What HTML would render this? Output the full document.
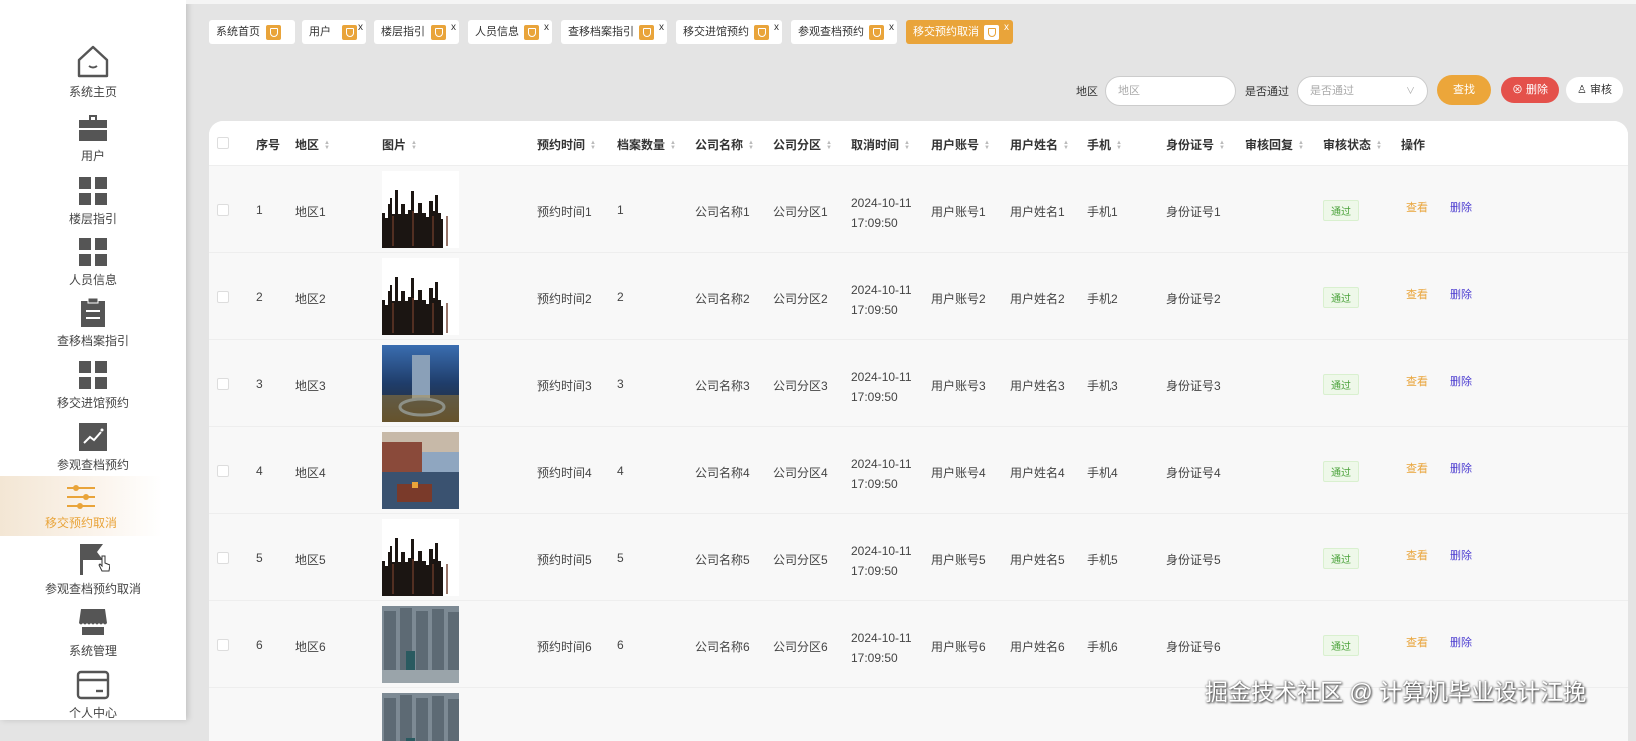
<!DOCTYPE html>
<html><head><meta charset="utf-8"><style>
*{margin:0;padding:0;box-sizing:border-box}
body{width:1636px;height:720px;overflow:hidden;background:#e4e4e4;font-family:"Liberation Sans","Noto Sans CJK SC",sans-serif;font-size:12px;color:#333;position:relative}
.side{position:absolute;left:0;top:0;width:186px;height:720px;background:#fff;box-shadow:2px 0 6px rgba(0,0,0,.15)}
.item{position:absolute;left:0;width:186px;text-align:center;color:#444;font-size:12px}
.item svg{display:block;margin:0 auto 4px}
.active{background:linear-gradient(90deg,#f3e6d4,#fbf4ec 60%,#fff);width:162px}
.topw{position:absolute;left:186px;top:0;right:0;height:4px;background:#f5f5f5}
.tag{position:absolute;top:20px;height:24px;background:#fff;border-radius:3px;font-size:11px;line-height:24px;padding-left:7px;color:#333}
.tag i{position:absolute;top:5px;width:15px;height:15px;background:#e9a43a;border-radius:2px}
.tag i:after{content:"";position:absolute;left:4px;top:3px;width:6px;height:7px;border:1px solid #fff;border-radius:1px 1px 4px 4px}
.tag b{position:absolute;top:-4px;font-weight:normal;font-size:10px;color:#333}
.card{position:absolute;left:209px;top:121px;width:1419px;height:620px;background:#f8f8f8;border-radius:14px 14px 0 0;overflow:hidden}
.hd{position:absolute;left:0;top:0;width:100%;height:44px;background:#fff}
.c{position:absolute;white-space:nowrap}
.h{font-weight:bold;color:#333;top:15px}
.s{display:inline-block;width:6px;margin-left:5px;vertical-align:middle;color:#bbb;font-size:6px;line-height:5px}
.cb{width:12px;height:12px;border:1px solid #ddd;background:#fff;border-radius:2px}
.row{position:absolute;left:0;width:100%;height:87px;border-top:1px solid #eee;color:#444}
.pass{border:1px solid #d9f0cf;background:#eef8e9;color:#4aa23a;font-size:10px;padding:2px 7px;border-radius:2px}
.inp{position:absolute;top:76px;height:30px;background:#fff;border:1px solid #ccc;border-radius:15px;color:#aaa;font-size:11px;line-height:28px;padding-left:12px}
.btn{position:absolute;height:26px;border-radius:13px;line-height:26px;text-align:center;font-size:11px}
.wm{position:absolute;left:1205px;top:673px;font-size:23px;color:#fff;text-shadow:0 0 2px #555,1px 1px 2px #333;white-space:nowrap}
</style></head><body>
<div class="side">
<div class="item" style="top:45px"><svg width="34" height="34" viewBox="0 0 34 34"><path d="M17 2L3 15v16h28V15z" fill="none" stroke="#555" stroke-width="2.4" stroke-linejoin="round"/><path d="M13 21q4 3 8 0" fill="none" stroke="#555" stroke-width="2"/></svg>系统主页</div>
<div class="item" style="top:113px"><svg width="30" height="30" viewBox="0 0 30 30"><path d="M11 2h8v5h-2V4h-4v3h-2z M1 7h28v8H1z M1 17h28v11H1z" fill="#555"/></svg>用户</div>
<div class="item" style="top:176px"><svg width="30" height="30" viewBox="0 0 30 30"><rect x="1" y="1" width="12" height="12" fill="#555"/><rect x="17" y="1" width="12" height="12" fill="#555"/><rect x="1" y="17" width="12" height="12" fill="#555"/><rect x="17" y="17" width="12" height="12" fill="#555"/></svg>楼层指引</div>
<div class="item" style="top:237px"><svg width="30" height="30" viewBox="0 0 30 30"><rect x="1" y="1" width="12" height="12" fill="#555"/><rect x="17" y="1" width="12" height="12" fill="#555"/><rect x="1" y="17" width="12" height="12" fill="#555"/><rect x="17" y="17" width="12" height="12" fill="#555"/></svg>人员信息</div>
<div class="item" style="top:298px"><svg width="30" height="30" viewBox="0 0 30 30"><path d="M3 3h24v26H3z" fill="#555"/><rect x="10" y="0" width="10" height="5" fill="#555" stroke="#fff" stroke-width="1"/><rect x="8" y="12" width="14" height="2" fill="#fff"/><rect x="8" y="19" width="14" height="2" fill="#fff"/></svg>查移档案指引</div>
<div class="item" style="top:360px"><svg width="30" height="30" viewBox="0 0 30 30"><rect x="1" y="1" width="12" height="12" fill="#555"/><rect x="17" y="1" width="12" height="12" fill="#555"/><rect x="1" y="17" width="12" height="12" fill="#555"/><rect x="17" y="17" width="12" height="12" fill="#555"/></svg>移交进馆预约</div>
<div class="item" style="top:422px"><svg width="30" height="30" viewBox="0 0 30 30"><rect x="1" y="1" width="28" height="28" fill="#555"/><path d="M6 21l6-6 4 3 7-8" fill="none" stroke="#fff" stroke-width="2"/><circle cx="24" cy="8" r="1.5" fill="#fff"/></svg>参观查档预约</div>
<div class="item active" style="top:476px;height:60px;padding-top:8px;color:#e9a43a"><svg width="30" height="26" viewBox="0 0 30 26"><g stroke="#e9a43a" stroke-width="2"><line x1="1" y1="4" x2="29" y2="4"/><line x1="1" y1="13" x2="29" y2="13"/><line x1="1" y1="22" x2="29" y2="22"/></g><circle cx="10" cy="4" r="3" fill="#e9a43a"/><circle cx="20" cy="13" r="3" fill="#e9a43a"/><circle cx="14" cy="22" r="3" fill="#e9a43a"/></svg>移交预约取消</div>
<div class="item" style="top:543px"><svg width="34" height="33" viewBox="0 0 34 33"><rect x="4" y="1" width="3" height="31" fill="#555"/><path d="M7 1h20l-6 8 6 8H7z" fill="#555"/><path d="M26 13v10l-2-2-1 1 3 6h7l1-6-5-2v-7z" fill="#fff" stroke="#333" stroke-width="1"/></svg>参观查档预约取消</div>
<div class="item" style="top:608px"><svg width="30" height="30" viewBox="0 0 30 30"><path d="M3 1h24l2 14q-2 3-4 0-2 3-4 0-2 3-4 0-2 3-4 0-2 3-4 0-2 3-4 0-2 3-4 0z M4 19h22v8H4z" fill="#555"/></svg>系统管理</div>
<div class="item" style="top:670px"><svg width="34" height="30" viewBox="0 0 34 30"><rect x="2" y="2" width="30" height="26" rx="3" fill="none" stroke="#555" stroke-width="2.4"/><line x1="2" y1="10" x2="32" y2="10" stroke="#555" stroke-width="2.4"/><line x1="20" y1="21" x2="27" y2="21" stroke="#555" stroke-width="2.4"/></svg>个人中心</div>
</div>
<div class="topw"></div>

<div class="tag" style="left:209px;width:86px">系统首页<i style="left:57px"></i></div>
<div class="tag" style="left:302px;width:64px">用户<i style="left:40px"></i><b style="left:56px">x</b></div>
<div class="tag" style="left:374px;width:85px">楼层指引<i style="left:57px"></i><b style="left:77px">x</b></div>
<div class="tag" style="left:468px;width:84px">人员信息<i style="left:56px"></i><b style="left:76px">x</b></div>
<div class="tag" style="left:561px;width:106px">查移档案指引<i style="left:78px"></i><b style="left:98px">x</b></div>
<div class="tag" style="left:676px;width:106px">移交进馆预约<i style="left:78px"></i><b style="left:98px">x</b></div>
<div class="tag" style="left:791px;width:106px">参观查档预约<i style="left:78px"></i><b style="left:98px">x</b></div>
<div class="tag" style="left:906px;width:107px;background:#e9a43a;color:#fff">移交预约取消<i class="w" style="left:78px;background:#fff"></i><b style="left:98px;color:#fff">x</b></div>
<style>.tag i.w:after{border-color:#e9a43a}</style>

<div class="c" style="left:1076px;top:83px;font-size:11px">地区</div>
<div class="inp" style="left:1105px;width:131px">地区</div>
<div class="c" style="left:1245px;top:83px;font-size:11px">是否通过</div>
<div class="inp" style="left:1297px;width:131px">是否通过<span style="position:absolute;right:12px;top:0;color:#aaa;font-size:9px">∨</span></div>
<div class="btn" style="left:1437px;top:75px;width:54px;height:30px;line-height:30px;border-radius:15px;background:#eca63a;color:#fff">查找</div>
<div class="btn" style="left:1501px;top:77px;width:58px;background:#e4514b;color:#fff">⊗ 删除</div>
<div class="btn" style="left:1566px;top:77px;width:57px;background:#fff;color:#333">♙ 审核</div>

<svg width="0" height="0" style="position:absolute"><defs>
<symbol id="city" viewBox="0 0 77 77"><rect width="77" height="77" fill="#fff"/><path d="M0 42h3v5h3V33h2v-6h2v16h3V19h3v24h3v-10h4v10h3v-4h3V20h3v22h4v-10h4v10h4v4h3V30h4v10h2V24h3v18h3v6h2v29H0z" fill="#1b1512"/><g fill="#6a3a2a" opacity=".7"><rect x="10" y="45" width="2" height="30"/><rect x="30" y="40" width="2" height="35"/><rect x="50" y="45" width="2" height="30"/><rect x="64" y="45" width="2" height="30"/></g></symbol>
<symbol id="p3" viewBox="0 0 77 77"><defs><linearGradient id="g3" x1="0" y1="0" x2="0" y2="1"><stop offset="0" stop-color="#3a6db0"/><stop offset=".5" stop-color="#1f3d6a"/><stop offset="1" stop-color="#2a2a2a"/></linearGradient></defs><rect width="77" height="77" fill="url(#g3)"/><path d="M30 10h18v45H30z" fill="#8aa0b8"/><ellipse cx="40" cy="62" rx="22" ry="8" fill="none" stroke="#6b8fc0" stroke-width="3"/><rect y="50" width="77" height="27" fill="#c09030" opacity=".4"/></symbol>
<symbol id="p4" viewBox="0 0 77 77"><rect width="77" height="77" fill="#8fa6c0"/><rect y="0" width="77" height="20" fill="#c7b9a8"/><path d="M0 10h40v30H0z" fill="#8a4a3a"/><rect y="40" width="77" height="37" fill="#3a5270"/><rect x="15" y="52" width="35" height="18" fill="#7a3a2a"/><rect x="30" y="50" width="6" height="6" fill="#e9a43a"/></symbol>
<symbol id="p6" viewBox="0 0 77 77"><rect width="77" height="77" fill="#7d8a94"/><g fill="#5d6a74"><rect x="2" y="5" width="12" height="65"/><rect x="18" y="2" width="12" height="68"/><rect x="34" y="5" width="12" height="65"/><rect x="50" y="3" width="12" height="67"/><rect x="66" y="6" width="11" height="64"/></g><rect x="24" y="45" width="9" height="22" fill="#2a5a60"/><rect y="64" width="77" height="13" fill="#9aa4aa"/></symbol>
</defs></svg>

<div class="card">
<div class="hd">
<div class="c cb" style="left:8px;top:16px"></div>
<div class="c h" style="left:47px">序号</div>
<div class="c h" style="left:86px">地区<span class="s">▲<br>▼</span></div>
<div class="c h" style="left:173px">图片<span class="s">▲<br>▼</span></div>
<div class="c h" style="left:328px">预约时间<span class="s">▲<br>▼</span></div>
<div class="c h" style="left:408px">档案数量<span class="s">▲<br>▼</span></div>
<div class="c h" style="left:486px">公司名称<span class="s">▲<br>▼</span></div>
<div class="c h" style="left:564px">公司分区<span class="s">▲<br>▼</span></div>
<div class="c h" style="left:642px">取消时间<span class="s">▲<br>▼</span></div>
<div class="c h" style="left:722px">用户账号<span class="s">▲<br>▼</span></div>
<div class="c h" style="left:801px">用户姓名<span class="s">▲<br>▼</span></div>
<div class="c h" style="left:878px">手机<span class="s">▲<br>▼</span></div>
<div class="c h" style="left:957px">身份证号<span class="s">▲<br>▼</span></div>
<div class="c h" style="left:1036px">审核回复<span class="s">▲<br>▼</span></div>
<div class="c h" style="left:1114px">审核状态<span class="s">▲<br>▼</span></div>
<div class="c h" style="left:1192px">操作</div>
</div>

<div class="row" style="top:44px"><div class="c cb" style="left:8px;top:38px"></div><div class="c" style="left:47px;top:37px">1</div><div class="c" style="left:86px;top:37px">地区1</div><svg class="c" style="left:173px;top:5px" width="77" height="77"><use href="#city" width="77" height="77"/></svg><div class="c" style="left:328px;top:37px">预约时间1</div><div class="c" style="left:408px;top:37px">1</div><div class="c" style="left:486px;top:37px">公司名称1</div><div class="c" style="left:564px;top:37px">公司分区1</div><div class="c" style="left:642px;top:27px;line-height:20px">2024-10-11<br>17:09:50</div><div class="c" style="left:722px;top:37px">用户账号1</div><div class="c" style="left:801px;top:37px">用户姓名1</div><div class="c" style="left:878px;top:37px">手机1</div><div class="c" style="left:957px;top:37px">身份证号1</div><div class="c pass" style="left:1114px;top:34px">通过</div><div class="c" style="left:1197px;top:33px;color:#e9a43a;font-size:11px">查看</div><div class="c" style="left:1241px;top:33px;color:#4b3bd0;font-size:11px">删除</div></div>

<div class="row" style="top:131px"><div class="c cb" style="left:8px;top:38px"></div><div class="c" style="left:47px;top:37px">2</div><div class="c" style="left:86px;top:37px">地区2</div><svg class="c" style="left:173px;top:5px" width="77" height="77"><use href="#city" width="77" height="77"/></svg><div class="c" style="left:328px;top:37px">预约时间2</div><div class="c" style="left:408px;top:37px">2</div><div class="c" style="left:486px;top:37px">公司名称2</div><div class="c" style="left:564px;top:37px">公司分区2</div><div class="c" style="left:642px;top:27px;line-height:20px">2024-10-11<br>17:09:50</div><div class="c" style="left:722px;top:37px">用户账号2</div><div class="c" style="left:801px;top:37px">用户姓名2</div><div class="c" style="left:878px;top:37px">手机2</div><div class="c" style="left:957px;top:37px">身份证号2</div><div class="c pass" style="left:1114px;top:34px">通过</div><div class="c" style="left:1197px;top:33px;color:#e9a43a;font-size:11px">查看</div><div class="c" style="left:1241px;top:33px;color:#4b3bd0;font-size:11px">删除</div></div>

<div class="row" style="top:218px"><div class="c cb" style="left:8px;top:38px"></div><div class="c" style="left:47px;top:37px">3</div><div class="c" style="left:86px;top:37px">地区3</div><svg class="c" style="left:173px;top:5px" width="77" height="77"><use href="#p3" width="77" height="77"/></svg><div class="c" style="left:328px;top:37px">预约时间3</div><div class="c" style="left:408px;top:37px">3</div><div class="c" style="left:486px;top:37px">公司名称3</div><div class="c" style="left:564px;top:37px">公司分区3</div><div class="c" style="left:642px;top:27px;line-height:20px">2024-10-11<br>17:09:50</div><div class="c" style="left:722px;top:37px">用户账号3</div><div class="c" style="left:801px;top:37px">用户姓名3</div><div class="c" style="left:878px;top:37px">手机3</div><div class="c" style="left:957px;top:37px">身份证号3</div><div class="c pass" style="left:1114px;top:34px">通过</div><div class="c" style="left:1197px;top:33px;color:#e9a43a;font-size:11px">查看</div><div class="c" style="left:1241px;top:33px;color:#4b3bd0;font-size:11px">删除</div></div>

<div class="row" style="top:305px"><div class="c cb" style="left:8px;top:38px"></div><div class="c" style="left:47px;top:37px">4</div><div class="c" style="left:86px;top:37px">地区4</div><svg class="c" style="left:173px;top:5px" width="77" height="77"><use href="#p4" width="77" height="77"/></svg><div class="c" style="left:328px;top:37px">预约时间4</div><div class="c" style="left:408px;top:37px">4</div><div class="c" style="left:486px;top:37px">公司名称4</div><div class="c" style="left:564px;top:37px">公司分区4</div><div class="c" style="left:642px;top:27px;line-height:20px">2024-10-11<br>17:09:50</div><div class="c" style="left:722px;top:37px">用户账号4</div><div class="c" style="left:801px;top:37px">用户姓名4</div><div class="c" style="left:878px;top:37px">手机4</div><div class="c" style="left:957px;top:37px">身份证号4</div><div class="c pass" style="left:1114px;top:34px">通过</div><div class="c" style="left:1197px;top:33px;color:#e9a43a;font-size:11px">查看</div><div class="c" style="left:1241px;top:33px;color:#4b3bd0;font-size:11px">删除</div></div>

<div class="row" style="top:392px"><div class="c cb" style="left:8px;top:38px"></div><div class="c" style="left:47px;top:37px">5</div><div class="c" style="left:86px;top:37px">地区5</div><svg class="c" style="left:173px;top:5px" width="77" height="77"><use href="#city" width="77" height="77"/></svg><div class="c" style="left:328px;top:37px">预约时间5</div><div class="c" style="left:408px;top:37px">5</div><div class="c" style="left:486px;top:37px">公司名称5</div><div class="c" style="left:564px;top:37px">公司分区5</div><div class="c" style="left:642px;top:27px;line-height:20px">2024-10-11<br>17:09:50</div><div class="c" style="left:722px;top:37px">用户账号5</div><div class="c" style="left:801px;top:37px">用户姓名5</div><div class="c" style="left:878px;top:37px">手机5</div><div class="c" style="left:957px;top:37px">身份证号5</div><div class="c pass" style="left:1114px;top:34px">通过</div><div class="c" style="left:1197px;top:33px;color:#e9a43a;font-size:11px">查看</div><div class="c" style="left:1241px;top:33px;color:#4b3bd0;font-size:11px">删除</div></div>

<div class="row" style="top:479px"><div class="c cb" style="left:8px;top:38px"></div><div class="c" style="left:47px;top:37px">6</div><div class="c" style="left:86px;top:37px">地区6</div><svg class="c" style="left:173px;top:5px" width="77" height="77"><use href="#p6" width="77" height="77"/></svg><div class="c" style="left:328px;top:37px">预约时间6</div><div class="c" style="left:408px;top:37px">6</div><div class="c" style="left:486px;top:37px">公司名称6</div><div class="c" style="left:564px;top:37px">公司分区6</div><div class="c" style="left:642px;top:27px;line-height:20px">2024-10-11<br>17:09:50</div><div class="c" style="left:722px;top:37px">用户账号6</div><div class="c" style="left:801px;top:37px">用户姓名6</div><div class="c" style="left:878px;top:37px">手机6</div><div class="c" style="left:957px;top:37px">身份证号6</div><div class="c pass" style="left:1114px;top:34px">通过</div><div class="c" style="left:1197px;top:33px;color:#e9a43a;font-size:11px">查看</div><div class="c" style="left:1241px;top:33px;color:#4b3bd0;font-size:11px">删除</div></div>

<div class="row" style="top:566px"><svg class="c" style="left:173px;top:5px" width="77" height="77"><use href="#p6" width="77" height="77"/></svg></div>
</div>

<div class="wm">掘金技术社区 @ 计算机毕业设计江挽</div>
</body></html>
